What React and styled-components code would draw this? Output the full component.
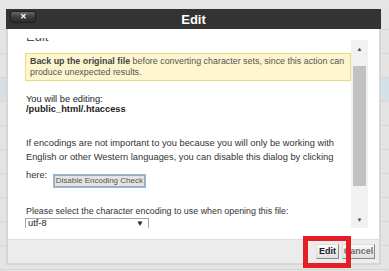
import React from 'react'
import styled, { createGlobalStyle } from 'styled-components'

const GlobalStyle = createGlobalStyle`
    html, body {
        margin: 0;
        padding: 0;
        width: 389px;
        height: 271px;
        overflow: hidden;
        background: #e4e4e4;
    }
    * { box-sizing: border-box; }
`

const rows = [false, false, false, true, false, false, false, false, false, false, false]

const Page = () => {
    return (
        <Screen>
            <GlobalStyle />
            <Backdrop>
                <TopBand />
                {rows.map((hl, i) => <BgRow key={i} $highlight={hl} />)}
            </Backdrop>
            <Dialog>
                <Header>
                    <CloseBtn>✕</CloseBtn>
                    <Title>Edit</Title>
                    <span />
                </Header>
                <Body>
                    <Scroller>
                        <Content>
                            <Heading>Edit</Heading>
                            <Warning>
                                <b>Back up the original file</b> before converting character sets, since this action can produce unexpected results.
                            </Warning>
                            <Editing>
                                You will be editing:<br />
                                <b>/public_html/.htaccess</b>
                            </Editing>
                            <Para>
                                If encodings are not important to you because you will only be working with English or other Western languages, you can disable this dialog by clicking here: <DisableBtn>Disable Encoding Check</DisableBtn>
                            </Para>
                            <Label>Please select the character encoding to use when opening this file:</Label>
                            <Select>
                                <span>utf-8</span>
                                <Caret>▼</Caret>
                            </Select>
                        </Content>
                        <Scrollbar>
                            <Arrow>▲</Arrow>
                            <Track>
                                <Thumb />
                            </Track>
                            <Arrow>▼</Arrow>
                        </Scrollbar>
                    </Scroller>
                </Body>
                <Footer>
                    <FootBtn $primary $w={23}>Edit</FootBtn>
                    <FootBtn $w={33}>Cancel</FootBtn>
                </Footer>
            </Dialog>
            <Highlight />
        </Screen>
    )
}

export default function App() {
    return <Page />
}

const Screen = styled.div`
    position: relative;
    width: 389px;
    height: 271px;
    overflow: hidden;
    font-family: "Liberation Sans", Arial, sans-serif;
`

const Backdrop = styled.div`
    display: flex;
    flex-direction: column;
`

const TopBand = styled.div`
    height: 6px;
    background: #e6e6e6;
`

const BgRow = styled.div`
    height: 24px;
    flex-shrink: 0;
    background: ${p => p.$highlight ? '#d3e0e8' : '#e4e4e4'};
    border-bottom: 1px solid #d6d6d6;
`

const Dialog = styled.div`
    position: absolute;
    left: 6px;
    top: 9px;
    width: 375px;
    height: 256px;
    display: flex;
    flex-direction: column;
`

const Header = styled.div`
    height: 20px;
    background: #333333;
    display: grid;
    grid-template-columns: 1fr auto 1fr;
    align-items: center;
    padding: 0 4px;
`

const CloseBtn = styled.div`
    justify-self: start;
    align-self: start;
    margin-top: 2px;
    width: 26px;
    height: 12px;
    border-radius: 3px;
    border: 1px solid #1e1e1e;
    background: linear-gradient(#6a6a6a, #3c3c3c 50%, #2c2c2c);
    color: #fff;
    font-size: 8px;
    font-weight: bold;
    line-height: 9px;
    text-align: center;
`

const Title = styled.div`
    color: #fff;
    font-weight: bold;
    font-size: 13px;
`

const Body = styled.div`
    flex: 1;
    background: #fff;
    border-left: 2px solid #d6d6d6;
    border-right: 2px solid #d6d6d6;
    padding: 9px 11px 11px 12px;
    display: flex;
`

const Scroller = styled.div`
    flex: 1;
    display: flex;
    height: 190px;
    overflow: hidden;
`

const Content = styled.div`
    flex: 1;
    padding-left: 6px;
    color: #333;
    font-size: 9.3px;
    overflow: hidden;
`

const Heading = styled.div`
    font-size: 13px;
    line-height: 13px;
    margin-top: -8px;
    color: #555;
`

const Warning = styled.div`
    margin: 10px 0 0 -1px;
    background: #fdf5cd;
    border: 1px solid #e7dc80;
    padding: 2px 4px;
    font-size: 8.9px;
    line-height: 11px;
    color: #555;
    b { color: #444; }
`

const Editing = styled.div`
    margin-top: 13px;
    line-height: 10px;
    color: #222;
`

const Para = styled.div`
    margin-top: 22px;
    line-height: 14px;
    color: #333;
    padding-right: 2px;
`

const DisableBtn = styled.span`
    display: inline-block;
    margin-left: 3px;
    margin-top: 10px;
    height: 14px;
    padding: 0 2px;
    border: 1px solid #8fb8ec;
    box-shadow: inset 0 0 0 1px #a9a9a9;
    background: #e4e4e4;
    color: #555;
    font-size: 8px;
    line-height: 12px;
    vertical-align: middle;
`

const Label = styled.div`
    margin-top: 18px;
    font-size: 8.9px;
    line-height: 10px;
    color: #333;
`

const Select = styled.div`
    margin: 2px 0 0 -1px;
    width: 124px;
    height: 14px;
    border: 1px solid #a6a6a6;
    border-bottom: none;
    display: flex;
    justify-content: space-between;
    padding: 0 4px 0 2px;
    color: #222;
    line-height: 9px;
`

const Caret = styled.span`
    font-size: 8px;
    color: #222;
`

const Scrollbar = styled.div`
    width: 17px;
    margin-top: 2px;
    background: #f1f1f1;
    display: flex;
    flex-direction: column;
`

const Arrow = styled.div`
    height: 17px;
    font-size: 6px;
    color: #505050;
    display: flex;
    align-items: center;
    justify-content: center;
`

const Track = styled.div`
    flex: 1;
    padding: 9px 2px 0;
`

const Thumb = styled.div`
    height: 120px;
    background: #c1c1c1;
`

const Footer = styled.div`
    height: 26px;
    background: #ececec;
    border: 2px solid #d6d6d6;
    border-top: 1px solid #dcdcdc;
    display: flex;
    justify-content: flex-end;
    align-items: flex-start;
    gap: 3px;
    padding: 4px 4px 0 0;
`

const FootBtn = styled.div`
    width: ${p => p.$w}px;
    height: 15px;
    border: 1px solid;
    border-color: #dedede #8a8a8a #8a8a8a #dedede;
    background: linear-gradient(#fafafa, #e0e0e0);
    font-size: 9px;
    font-weight: bold;
    line-height: 13px;
    text-align: center;
    overflow: hidden;
    white-space: nowrap;
    color: ${p => p.$primary ? '#1e1e1e' : '#6e6e6e'};
`

const Highlight = styled.div`
    position: absolute;
    left: 303px;
    top: 236px;
    width: 48px;
    height: 32px;
    border: 5px solid #e41e26;
`
